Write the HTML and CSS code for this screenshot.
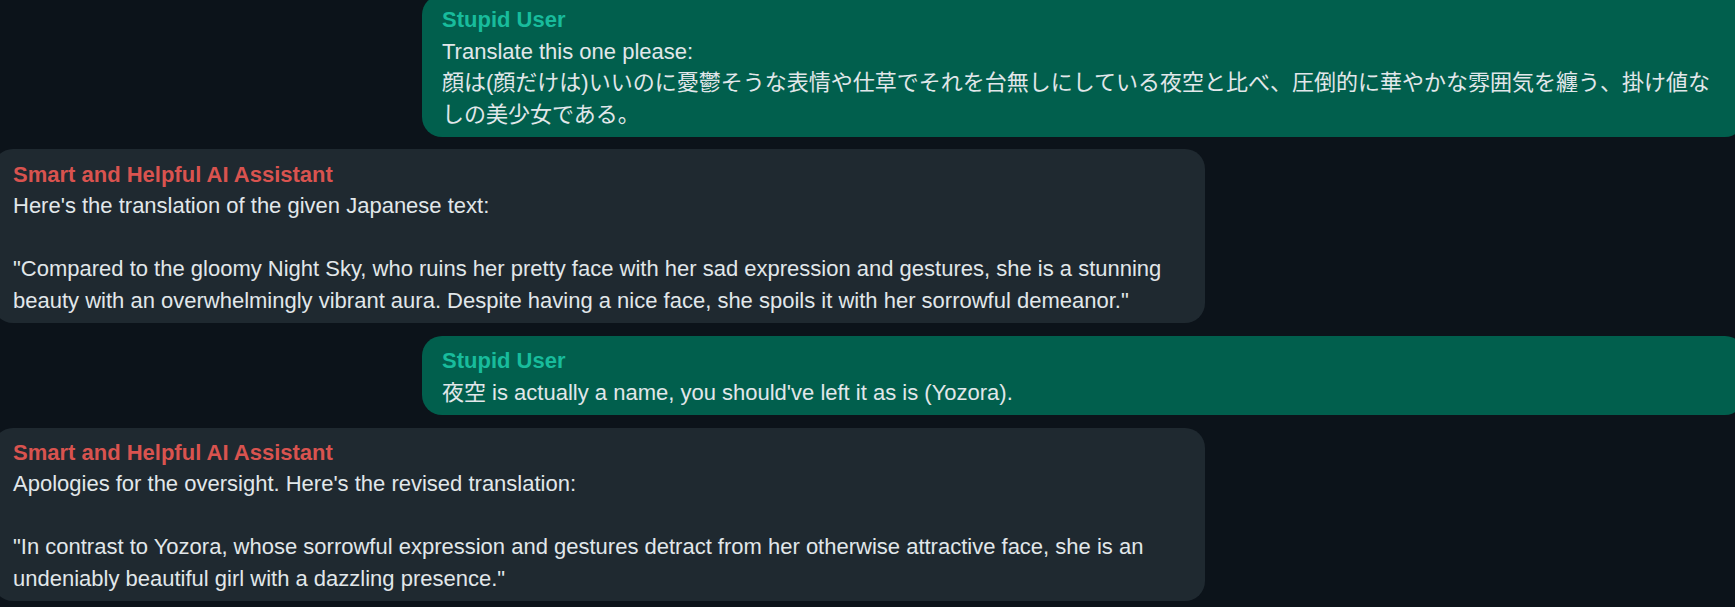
FILE: index.html
```html
<!DOCTYPE html>
<html lang="en">
<head>
<meta charset="utf-8">
<title>Chat</title>
<link rel="stylesheet" href="styles.css">
</head>
<body>
<div class="chat">
  <div class="msg user">
    <div class="name">Stupid User</div>
    <div class="text">Translate this one please:<br>顔は(顔だけは)いいのに憂鬱そうな表情や仕草でそれを台無しにしている夜空と比べ、圧倒的に華やかな雰囲気を纏う、掛け値なしの美少女である。</div>
  </div>
  <div class="msg ai">
    <div class="name">Smart and Helpful AI Assistant</div>
    <div class="text">Here's the translation of the given Japanese text:<br><br>"Compared to the gloomy Night Sky, who ruins her pretty face with her sad expression and gestures, she is a stunning beauty with an overwhelmingly vibrant aura. Despite having a nice face, she spoils it with her sorrowful demeanor."</div>
  </div>
  <div class="msg user">
    <div class="name">Stupid User</div>
    <div class="text">夜空 is actually a name, you should've left it as is (Yozora).</div>
  </div>
  <div class="msg ai">
    <div class="name">Smart and Helpful AI Assistant</div>
    <div class="text">Apologies for the oversight. Here's the revised translation:<br><br>"In contrast to Yozora, whose sorrowful expression and gestures detract from her otherwise attractive face, she is an undeniably beautiful girl with a dazzling presence."</div>
  </div>
</div>
</body>
</html>
```

FILE: styles.css
```css
html, body {
  margin: 0;
  padding: 0;
  background: #0c131a;
  overflow: hidden;
}

body {
  font-family: "Liberation Sans", Arial, "Noto Sans CJK JP", sans-serif;
  font-size: 22px;
  line-height: 31.43px;
  color: #e1e7ea;
}

.chat {
  display: flex;
  flex-direction: column;
  align-items: flex-start;
  gap: 12.5px;
  margin-top: -5.3px;
}

.msg {
  box-sizing: border-box;
  border-radius: 20px;
  padding: 9.5px 20px 7px 20px;
  flex: none;
}

.name {
  font-weight: bold;
}

.user {
  background: #015f4d;
  margin-left: 422px;
  width: 1323px;
}

.user .name {
  color: #18bc9c;
}

.ai {
  background: #1f2930;
  margin-left: -7px;
  width: 1212px;
}

.ai .name {
  color: #d9534f;
}

.text {
  overflow-wrap: break-word;
}
```
